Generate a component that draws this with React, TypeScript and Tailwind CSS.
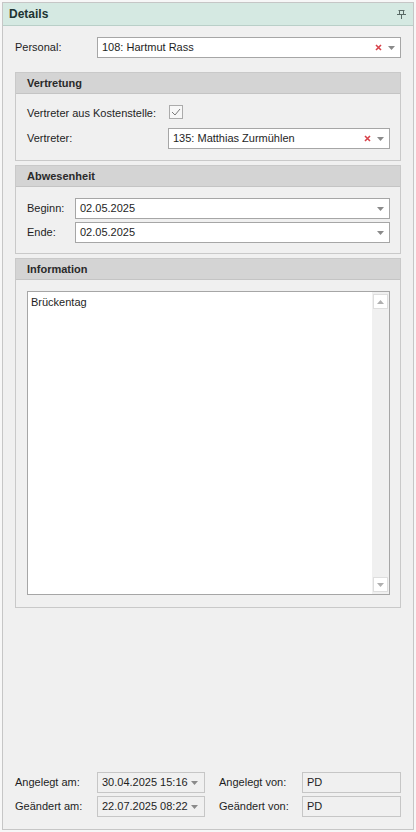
const font = { fontFamily: '"Liberation Sans", Arial, sans-serif' };

function Arrow() {
  return (
    <svg width="7" height="4" viewBox="0 0 7 4" className="shrink-0">
      <path d="M0 0h7L3.5 4z" fill="#8a8a8a" />
    </svg>
  );
}

function ClearX() {
  return (
    <svg width="7" height="7" viewBox="0 0 7 7" className="shrink-0">
      <path d="M1 1l5 5M6 1L1 6" stroke="#d8424a" strokeWidth="1.6" />
    </svg>
  );
}

function Pin() {
  return (
    <svg width="9" height="9" viewBox="0 0 9 9">
      <path
        d="M1.5 0.5h6M2.5 0.5v4M6.5 0.5v4M0 4.5h9M4.5 4.5v4.5"
        stroke="#5a6a66"
        strokeWidth="1"
        fill="none"
      />
    </svg>
  );
}

function Combo({ value, clear }: { value: string; clear?: boolean }) {
  return (
    <div className="flex-1 h-[21px] bg-white border border-[#a6a6a6] flex items-center pl-[4px] pr-[5px]">
      <span className="flex-1 text-[#1e1e1e]">{value}</span>
      {clear && (
        <div className="mr-[6px] flex items-center">
          <ClearX />
        </div>
      )}
      <Arrow />
    </div>
  );
}

function Group({ title, children }: { title: string; children: React.ReactNode }) {
  return (
    <div className="border border-[#c9c9c9]">
      <div className="h-[21px] bg-[#d4d4d4] border-b border-[#c4c4c4] flex items-center pl-[11px] font-bold text-[#2a2a2a]">
        {title}
      </div>
      <div className="pl-[11px] pr-[10px]">{children}</div>
    </div>
  );
}

function ReadField({ value, width }: { value: string; width: string }) {
  return (
    <div className={`${width} h-[21px] border border-[#c6c6c6] flex items-center pl-[4px] pr-[6px]`}>
      <span className="flex-1">{value}</span>
    </div>
  );
}

export default function App() {
  return (
    <div className="w-[416px] h-[832px] bg-[#f7f7f7] p-[2px] text-[11px] text-[#1e1e1e]" style={font}>
      <div className="h-full bg-[#f0f0f0] border border-[#c6c6c6] flex flex-col">
        <div className="h-[23px] bg-[#d5e9e2] border-b border-[#b9cfc8] flex items-center justify-between pl-[6px] pr-[7px]">
          <span className="font-bold text-[12px] text-[#203432]">Details</span>
          <Pin />
        </div>

        <div className="flex-1 flex flex-col px-[12px]">
          <div className="mt-[11px] flex items-center">
            <span className="w-[82px]">Personal:</span>
            <Combo value="108: Hartmut Rass" clear />
          </div>

          <div className="mt-[14px]">
            <Group title="Vertretung">
              <div className="pt-[9px] pb-[11px] flex flex-col gap-[4px]">
                <div className="h-[21px] flex items-center">
                  <span className="w-[141px]">Vertreter aus Kostenstelle:</span>
                  <div className="w-[14px] h-[14px] border border-[#ababab] bg-[#f7f7f7] flex items-center justify-center ml-[1px] -mt-[3px]">
                    <svg width="10" height="8" viewBox="0 0 10 8">
                      <path d="M1 4l3 3 5-6" stroke="#7a7a7a" strokeWidth="1" fill="none" />
                    </svg>
                  </div>
                </div>
                <div className="flex items-center">
                  <span className="w-[141px]">Vertreter:</span>
                  <Combo value="135: Matthias Zurmühlen" clear />
                </div>
              </div>
            </Group>
          </div>

          <div className="mt-[4px]">
            <Group title="Abwesenheit">
              <div className="pt-[11px] pb-[10px] flex flex-col gap-[3px]">
                <div className="flex items-center">
                  <span className="w-[48px]">Beginn:</span>
                  <Combo value="02.05.2025" />
                </div>
                <div className="flex items-center">
                  <span className="w-[48px]">Ende:</span>
                  <Combo value="02.05.2025" />
                </div>
              </div>
            </Group>
          </div>

          <div className="mt-[4px]">
            <Group title="Information">
              <div className="pt-[11px] pb-[12px]">
                <div className="h-[304px] bg-white border border-[#a6a6a6] flex">
                  <div className="flex-1 pl-[3px] pt-[2px]">Brückentag</div>
                  <div className="w-[17px] bg-[#f0f0f0] flex flex-col justify-between items-center py-[2px]">
                    <div className="w-[15px] h-[15px] bg-white border border-[#dedede] flex items-center justify-center">
                      <svg width="7" height="4" viewBox="0 0 7 4">
                        <path d="M0 4h7L3.5 0z" fill="#b0b0b0" />
                      </svg>
                    </div>
                    <div className="w-[15px] h-[15px] bg-white border border-[#dedede] flex items-center justify-center">
                      <svg width="7" height="4" viewBox="0 0 7 4">
                        <path d="M0 0h7L3.5 4z" fill="#b0b0b0" />
                      </svg>
                    </div>
                  </div>
                </div>
              </div>
            </Group>
          </div>

          <div className="mt-auto mb-[12px] flex flex-col gap-[3px]">
            <div className="flex items-center">
              <span className="w-[82px]">Angelegt am:</span>
              <div className="w-[108px] h-[21px] border border-[#c6c6c6] flex items-center pl-[4px] pr-[6px]">
                <span className="flex-1">30.04.2025 15:16</span>
                <Arrow />
              </div>
              <span className="w-[83px] ml-[14px]">Angelegt von:</span>
              <ReadField value="PD" width="flex-1" />
            </div>
            <div className="flex items-center">
              <span className="w-[82px]">Geändert am:</span>
              <div className="w-[108px] h-[21px] border border-[#c6c6c6] flex items-center pl-[4px] pr-[6px]">
                <span className="flex-1">22.07.2025 08:22</span>
                <Arrow />
              </div>
              <span className="w-[83px] ml-[14px]">Geändert von:</span>
              <ReadField value="PD" width="flex-1" />
            </div>
          </div>
        </div>
      </div>
    </div>
  );
}
